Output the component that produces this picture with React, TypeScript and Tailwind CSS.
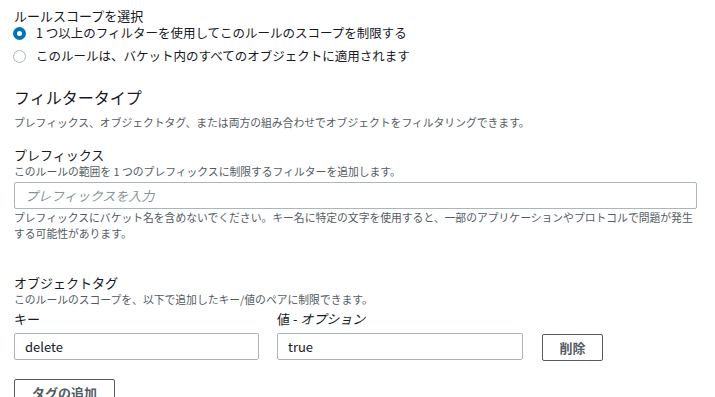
export default function App() {
  return (
    <div
      className="w-[715px] h-[397px] overflow-hidden bg-white text-[#16191f]"
      style={{ fontFamily: '"Noto Sans CJK JP", "Noto Sans", sans-serif' }}
    >
      <div className="pl-[14px] pt-[7px]">
        {/* rule scope */}
        <div className="text-[13px] leading-[18px]">ルールスコープを選択</div>
        <div className="mt-[-1px] flex flex-col gap-[5px]">
          <label className="flex items-center gap-[10px] h-[18px]">
            <span className="w-[13px] h-[13px] rounded-full border-[4px] border-[#0073bb] bg-white ml-[-1px]" />
            <span className="text-[12.5px] leading-[18px]">1 つ以上のフィルターを使用してこのルールのスコープを制限する</span>
          </label>
          <label className="flex items-center gap-[10px] h-[18px]">
            <span className="w-[13px] h-[13px] rounded-full border border-[#aab7b8] bg-white ml-[-1px]" />
            <span className="text-[12.5px] leading-[18px]">このルールは、バケット内のすべてのオブジェクトに適用されます</span>
          </label>
        </div>

        {/* filter type */}
        <div className="mt-[20px] text-[16px] leading-[24px]">フィルタータイプ</div>
        <div className="mt-[5px] text-[10.8px] leading-[16px] text-[#545b64]">
          プレフィックス、オブジェクトタグ、または両方の組み合わせでオブジェクトをフィルタリングできます。
        </div>

        {/* prefix */}
        <div className="mt-[17px] text-[13px] leading-[16px]">プレフィックス</div>
        <div className="text-[10.8px] leading-[16px] text-[#545b64]">
          このルールの範囲を 1 つのプレフィックスに制限するフィルターを追加します。
        </div>
        <input
          className="mt-[3px] block w-[683px] h-[27px] border border-[#aab7b8] rounded-[2px] px-[10px] text-[13px] outline-none placeholder:italic placeholder:text-[#879596]"
          placeholder="プレフィックスを入力"
        />
        <div className="w-[688px] text-[10.8px] leading-[16px] text-[#545b64]">
          プレフィックスにバケット名を含めないでください。キー名に特定の文字を使用すると、一部のアプリケーションやプロトコルで問題が発生する可能性があります。
        </div>

        {/* object tags */}
        <div className="mt-[34px] text-[13px] leading-[16px]">オブジェクトタグ</div>
        <div className="text-[10.8px] leading-[16px] text-[#545b64]">
          このルールのスコープを、以下で追加したキー/値のペアに制限できます。
        </div>
        <div className="mt-[4px] flex items-end gap-[18px]">
          <div className="flex flex-col">
            <span className="text-[13px] leading-[16px]">キー</span>
            <input
              className="mt-[6px] w-[245px] h-[27px] border border-[#aab7b8] rounded-[2px] px-[10px] text-[13px] outline-none"
              defaultValue="delete"
            />
          </div>
          <div className="flex flex-col">
            <span className="text-[13px] leading-[16px]">
              値 - <i>オプション</i>
            </span>
            <input
              className="mt-[6px] w-[246px] h-[27px] border border-[#aab7b8] rounded-[2px] px-[10px] text-[13px] outline-none"
              defaultValue="true"
            />
          </div>
          <button className="ml-[1px] mb-[-1px] w-[61px] h-[27px] border border-[#545b64] rounded-[2px] text-[13px] font-bold text-[#545b64]">
            削除
          </button>
        </div>
        <button className="mt-[19px] block w-[101px] h-[27px] border border-[#545b64] rounded-[2px] text-[13px] font-bold text-[#545b64]">
          タグの追加
        </button>
      </div>
    </div>
  );
}
